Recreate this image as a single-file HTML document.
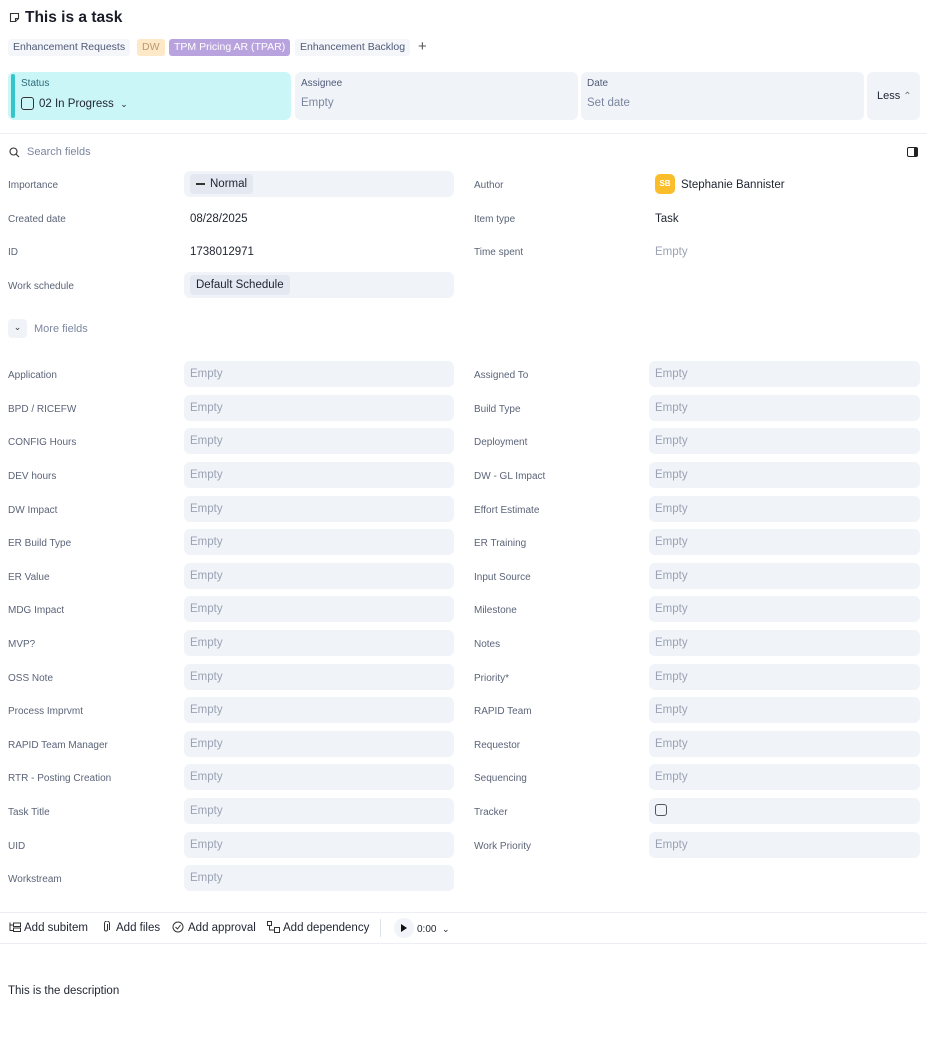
<!DOCTYPE html>
<html><head><meta charset="utf-8"><style>
*{box-sizing:border-box;margin:0;padding:0}
body{width:927px;height:1039px;background:#fff;font-family:"Liberation Sans",sans-serif;color:#1f2430;position:relative;overflow:hidden}
.a{position:absolute}
.lbl{position:absolute;font-size:10px;color:#5b6478;line-height:14px;margin-top:1px}
.box{position:absolute;height:26px;background:#f0f3f8;border-radius:6px;font-size:11.5px;color:#9aa2b3;line-height:26px;padding-left:6px}
.tag{position:absolute;top:39px;height:17px;line-height:17px;font-size:10.5px;padding:0 5px;border-radius:3px}
.card{position:absolute;top:72px;height:48px;background:#f0f3f8;border-radius:6px}
.card .t{position:absolute;left:6px;top:6px;font-size:10px;color:#4f5a78}
.card .v{position:absolute;left:6px;top:25px;font-size:11.5px;color:#7b86a0}
.val{position:absolute;font-size:11.5px;color:#1f2430;line-height:14px}
.tb{position:absolute;top:921px;font-size:11.5px;color:#1f2430;line-height:14px}
</style></head><body>
<svg class="a" style="left:9px;top:12px" width="11" height="11" viewBox="0 0 11 11"><path d="M1.5 1.5h8v5l-3 3h-5z" fill="none" stroke="#333" stroke-width="1.1"/><path d="M6.5 9.5v-3h3" fill="none" stroke="#333" stroke-width="1.1"/></svg>
<div class="a" style="left:25px;top:9px;font-size:15.5px;font-weight:bold;color:#1a1d28">This is a task</div>
<div class="tag" style="left:8px;background:#f5f6fa;color:#4f5a78">Enhancement Requests</div>
<div class="tag" style="left:137px;background:#fde8c8;color:#b89a70">DW</div>
<div class="tag" style="left:169px;background:#b9a3de;color:#fff">TPM Pricing AR (TPAR)</div>
<div class="tag" style="left:295px;background:#f5f6fa;color:#4f5a78">Enhancement Backlog</div>
<div class="a" style="left:418px;top:38px;font-size:15px;color:#555">+</div>

<div class="card" style="left:8px;width:283px;background:#cbf6f8"><div class="a" style="left:3px;top:2px;width:4px;height:44px;background:#35c4cc;border-radius:2px"></div><div class="t" style="left:13px;color:#2a6a7a">Status</div><div class="a" style="left:13px;top:25px;width:13px;height:13px;border:1px solid #333;border-radius:3px"></div><div class="v" style="left:31px;top:26px;color:#1f2430">02 In Progress &nbsp;<span style="font-size:9px">&#8964;</span></div></div>
<div class="card" style="left:295px;width:283px"><div class="t">Assignee</div><div class="v">Empty</div></div>
<div class="card" style="left:581px;width:283px"><div class="t">Date</div><div class="v">Set date</div></div>
<div class="card" style="left:867px;width:53px"><div class="a" style="left:10px;top:18px;font-size:11px;color:#1f2430">Less <span style="color:#777;font-size:10px">&#8963;</span></div></div>
<div class="a" style="left:0;top:133px;width:927px;height:1px;background:#eceef3"></div>

<svg class="a" style="left:9px;top:147px" width="11" height="11" viewBox="0 0 11 11"><circle cx="4.5" cy="4.5" r="3.5" fill="none" stroke="#333" stroke-width="1.1"/><path d="M7 7l3 3" stroke="#333" stroke-width="1.1"/></svg>
<div class="a" style="left:27px;top:146px;font-size:11px;color:#7b86a0">Search fields</div>
<div class="a" style="left:907px;top:147px;width:11px;height:10px;border:1.3px solid #222;border-radius:2px;border-right-width:4px"></div>

<div class="lbl" style="left:8px;top:178px">Importance</div>
<div class="box" style="left:184px;top:171px;width:270px"><span style="display:inline-block;margin-top:3px;height:20px;line-height:20px;background:#e3e8f1;border-radius:4px;padding:0 6px;color:#1f2430;vertical-align:top"><span style="display:inline-block;width:9px;height:2px;background:#333;vertical-align:middle;margin-right:5px"></span>Normal</span></div>
<div class="lbl" style="left:474px;top:178px">Author</div>
<div class="a" style="left:655px;top:174px;width:20px;height:20px;background:#fbbd2a;border-radius:5px;color:#fff;font-size:8px;font-weight:bold;text-align:center;line-height:20px">SB</div>
<div class="val" style="left:681px;top:178px">Stephanie Bannister</div>
<div class="lbl" style="left:8px;top:212px">Created date</div><div class="val" style="left:190px;top:212px">08/28/2025</div>
<div class="lbl" style="left:474px;top:212px">Item type</div><div class="val" style="left:655px;top:212px">Task</div>
<div class="lbl" style="left:8px;top:245px">ID</div><div class="val" style="left:190px;top:245px">1738012971</div>
<div class="lbl" style="left:474px;top:245px">Time spent</div><div class="val" style="left:655px;top:245px;color:#9aa2b3">Empty</div>
<div class="lbl" style="left:8px;top:279px">Work schedule</div>
<div class="box" style="left:184px;top:272px;width:270px"><span style="display:inline-block;margin-top:3px;height:20px;line-height:20px;background:#e3e8f1;border-radius:4px;padding:0 6px;color:#1f2430;vertical-align:top">Default Schedule</span></div>
<div class="a" style="left:8px;top:319px;width:19px;height:19px;background:#f0f3f8;border-radius:4px;font-size:9px;text-align:center;line-height:17px;color:#333">&#8964;</div>
<div class="a" style="left:34px;top:323px;font-size:11px;color:#7b86a0">More fields</div>

<div class="lbl" style="left:8px;top:368px">Application</div><div class="box" style="left:184px;top:361px;width:270px">Empty</div>
<div class="lbl" style="left:474px;top:368px">Assigned To</div><div class="box" style="left:649px;top:361px;width:271px">Empty</div>
<div class="lbl" style="left:8px;top:402px">BPD / RICEFW</div><div class="box" style="left:184px;top:395px;width:270px">Empty</div>
<div class="lbl" style="left:474px;top:402px">Build Type</div><div class="box" style="left:649px;top:395px;width:271px">Empty</div>
<div class="lbl" style="left:8px;top:435px">CONFIG Hours</div><div class="box" style="left:184px;top:428px;width:270px">Empty</div>
<div class="lbl" style="left:474px;top:435px">Deployment</div><div class="box" style="left:649px;top:428px;width:271px">Empty</div>
<div class="lbl" style="left:8px;top:469px">DEV hours</div><div class="box" style="left:184px;top:462px;width:270px">Empty</div>
<div class="lbl" style="left:474px;top:469px">DW - GL Impact</div><div class="box" style="left:649px;top:462px;width:271px">Empty</div>
<div class="lbl" style="left:8px;top:503px">DW Impact</div><div class="box" style="left:184px;top:496px;width:270px">Empty</div>
<div class="lbl" style="left:474px;top:503px">Effort Estimate</div><div class="box" style="left:649px;top:496px;width:271px">Empty</div>
<div class="lbl" style="left:8px;top:536px">ER Build Type</div><div class="box" style="left:184px;top:529px;width:270px">Empty</div>
<div class="lbl" style="left:474px;top:536px">ER Training</div><div class="box" style="left:649px;top:529px;width:271px">Empty</div>
<div class="lbl" style="left:8px;top:570px">ER Value</div><div class="box" style="left:184px;top:563px;width:270px">Empty</div>
<div class="lbl" style="left:474px;top:570px">Input Source</div><div class="box" style="left:649px;top:563px;width:271px">Empty</div>
<div class="lbl" style="left:8px;top:603px">MDG Impact</div><div class="box" style="left:184px;top:596px;width:270px">Empty</div>
<div class="lbl" style="left:474px;top:603px">Milestone</div><div class="box" style="left:649px;top:596px;width:271px">Empty</div>
<div class="lbl" style="left:8px;top:637px">MVP?</div><div class="box" style="left:184px;top:630px;width:270px">Empty</div>
<div class="lbl" style="left:474px;top:637px">Notes</div><div class="box" style="left:649px;top:630px;width:271px">Empty</div>
<div class="lbl" style="left:8px;top:671px">OSS Note</div><div class="box" style="left:184px;top:664px;width:270px">Empty</div>
<div class="lbl" style="left:474px;top:671px">Priority*</div><div class="box" style="left:649px;top:664px;width:271px">Empty</div>
<div class="lbl" style="left:8px;top:704px">Process Imprvmt</div><div class="box" style="left:184px;top:697px;width:270px">Empty</div>
<div class="lbl" style="left:474px;top:704px">RAPID Team</div><div class="box" style="left:649px;top:697px;width:271px">Empty</div>
<div class="lbl" style="left:8px;top:738px">RAPID Team Manager</div><div class="box" style="left:184px;top:731px;width:270px">Empty</div>
<div class="lbl" style="left:474px;top:738px">Requestor</div><div class="box" style="left:649px;top:731px;width:271px">Empty</div>
<div class="lbl" style="left:8px;top:771px">RTR - Posting Creation</div><div class="box" style="left:184px;top:764px;width:270px">Empty</div>
<div class="lbl" style="left:474px;top:771px">Sequencing</div><div class="box" style="left:649px;top:764px;width:271px">Empty</div>
<div class="lbl" style="left:8px;top:805px">Task Title</div><div class="box" style="left:184px;top:798px;width:270px">Empty</div>
<div class="lbl" style="left:474px;top:805px">Tracker</div><div class="box" style="left:649px;top:798px;width:271px"><span style="display:inline-block;width:12px;height:12px;border:1px solid #555;border-radius:3px;vertical-align:middle;margin-top:-2px"></span></div>
<div class="lbl" style="left:8px;top:839px">UID</div><div class="box" style="left:184px;top:832px;width:270px">Empty</div>
<div class="lbl" style="left:474px;top:839px">Work Priority</div><div class="box" style="left:649px;top:832px;width:271px">Empty</div>
<div class="lbl" style="left:8px;top:872px">Workstream</div><div class="box" style="left:184px;top:865px;width:270px">Empty</div>

<div class="a" style="left:0;top:912px;width:927px;height:1px;background:#eceef3"></div>
<div class="a" style="left:0;top:943px;width:927px;height:1px;background:#eceef3"></div>
<svg class="a" style="left:9px;top:922px" width="12" height="11" viewBox="0 0 12 11"><path d="M1 0.5v8h3M1 3h3" fill="none" stroke="#333"/><rect x="4.5" y="1" width="7" height="3.5" fill="none" stroke="#333"/><rect x="4.5" y="6" width="7" height="3.5" fill="none" stroke="#333"/></svg>
<div class="tb" style="left:24px">Add subitem</div>
<svg class="a" style="left:102px;top:921px" width="8" height="12" viewBox="0 0 8 12"><path d="M5.5 3v5.5a1.5 1.5 0 0 1-3 0V2.5a2.5 2.5 0 0 1 5 0V9" fill="none" stroke="#333"/></svg>
<div class="tb" style="left:116px">Add files</div>
<svg class="a" style="left:172px;top:921px" width="12" height="12" viewBox="0 0 12 12"><circle cx="6" cy="6" r="5" fill="none" stroke="#333"/><path d="M3.5 6l2 2 3-4" fill="none" stroke="#333"/></svg>
<div class="tb" style="left:188px">Add approval</div>
<svg class="a" style="left:267px;top:921px" width="13" height="12" viewBox="0 0 13 12"><rect x="0.5" y="0.5" width="4" height="4" fill="none" stroke="#333"/><rect x="7.5" y="6.5" width="5" height="5" fill="none" stroke="#333"/><path d="M2.5 4.5v4.5h5" fill="none" stroke="#333"/></svg>
<div class="tb" style="left:283px">Add dependency</div>
<div class="a" style="left:380px;top:919px;width:1px;height:18px;background:#dde1e8"></div>
<div class="a" style="left:394px;top:918px;width:20px;height:20px;border-radius:10px;background:#f0f3f8"></div>
<svg class="a" style="left:400px;top:923px" width="8" height="10" viewBox="0 0 8 10"><path d="M1 1l6 4-6 4z" fill="#111"/></svg>
<div class="tb" style="left:417px;font-size:10px;top:922px">0:00 &nbsp;<span style="font-size:9px">&#8964;</span></div>

<div class="a" style="left:8px;top:985px;font-size:11.5px;color:#1f2430">This is the description</div>
</body></html>
